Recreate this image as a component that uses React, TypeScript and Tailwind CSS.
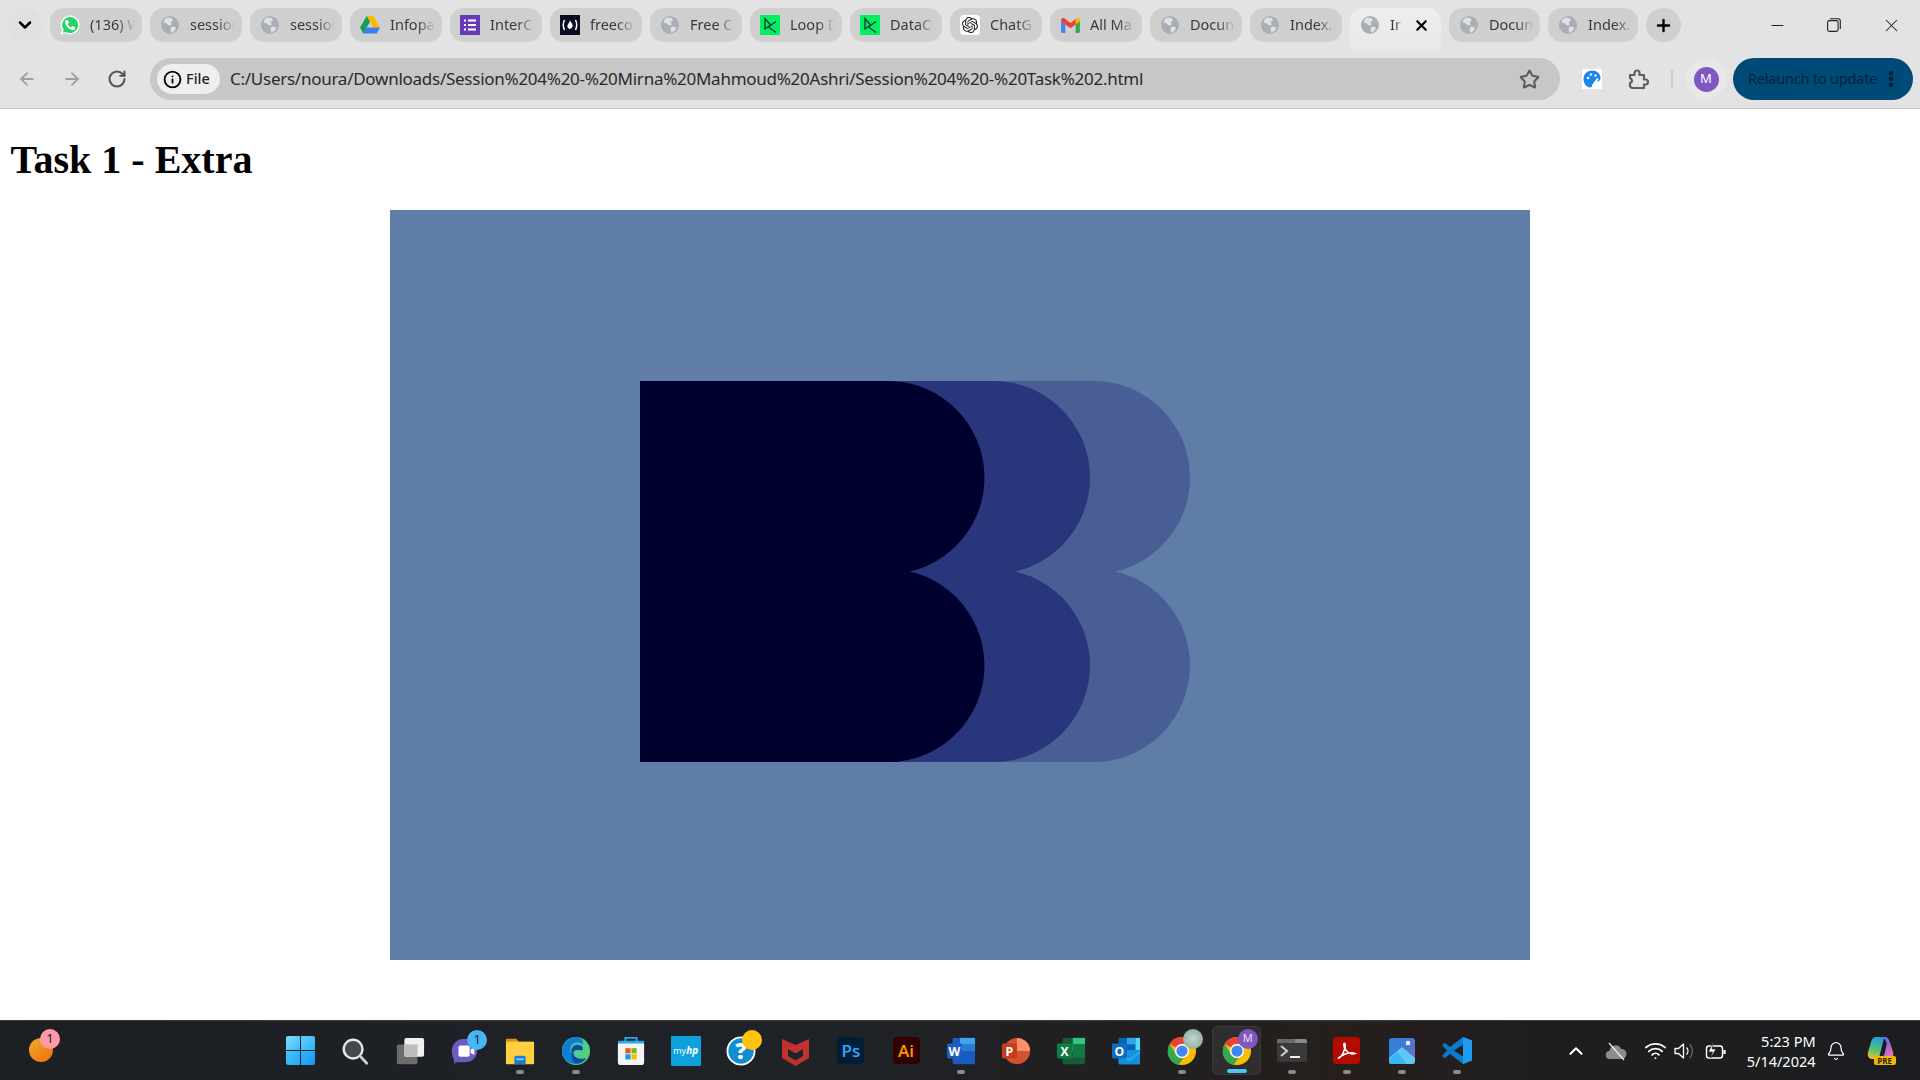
import React from "react";
import { ArrowLeft, ArrowRight, RotateCw, Star, Info, X, Plus, ChevronDown, Minus, ChevronUp, Bell, Wifi, EllipsisVertical } from "lucide-react";
import { FaPhoneAlt } from "react-icons/fa";
import { SiOpenai } from "react-icons/si";

const ui = "font-['Noto_Sans','Open_Sans',sans-serif]";

function Globe() {
  return (
    <svg viewBox="0 0 20 20" className="w-5 h-5 shrink-0">
      <circle cx="10" cy="10" r="9" fill="#a9aeb4" />
      <path d="M7 2.5 11.5 3 13 5 10.5 7.5 12 9.5 9 10.5 6 8 3.5 7.5 4.5 4.5ZM11.5 11.5 16 12 15 15.5 11.5 18 10.5 14.5Z" fill="#dfe1e4" />
    </svg>
  );
}
function Whats() {
  return (
    <div className="relative w-5 h-5 flex items-center justify-center shrink-0">
      <svg viewBox="0 0 20 20" className="w-5 h-5">
        <path d="M10 .5a9.400 9.400 0 1 1-4.600 17.600L.5 19.500l1.400-4.800A9.400 9.400 0 0 1 10 .5Z" fill="#fff" />
        <path d="M10 2a8 8 0 1 1-4 14.900l-3 .9.900-2.900A8 8 0 0 1 10 2Z" fill="#25d366" />
      </svg>
      <FaPhoneAlt className="absolute w-[10px] h-[10px] text-white" />
    </div>
  );
}
function Drive() {
  return (
    <svg viewBox="0 0 20 18" className="w-5 h-[18px] shrink-0">
      <path d="M6.700 0h6.600l6.700 11.600h-6.600z" fill="#ffba00" />
      <path d="M6.700 0 0 11.600 3.300 17.400 10 5.800z" fill="#0fa15d" />
      <path d="M6.600 11.600H20l-3.300 5.800H3.300z" fill="#3f7ee8" />
    </svg>
  );
}
function Forms() {
  return (
    <svg viewBox="0 0 20 20" className="w-5 h-5 shrink-0">
      <rect width="20" height="20" fill="#673ab7" />
      <path d="M8 5.500h8M8 10h8M8 14.500h8" stroke="#fff" strokeWidth="2" />
      <path d="M4 5.500h2M4 10h2M4 14.500h2" stroke="#fff" strokeWidth="2" />
    </svg>
  );
}
function Fcc() {
  return (
    <svg viewBox="0 0 20 20" className="w-5 h-5 shrink-0">
      <rect width="20" height="20" fill="#0a0a23" />
      <path d="M4.500 5Q2 10 4.500 15M15.500 5Q18 10 15.500 15" stroke="#fff" strokeWidth="1.500" fill="none" />
      <path d="M10 5c.5 2.500 3 3.500 2.600 6.200-.3 1.600-1.400 2.400-2.600 2.600-1.300-.2-2.400-1-2.600-2.400C7.200 9.500 9.800 8 10 5Z" fill="#fff" />
    </svg>
  );
}
function DataCamp() {
  return (
    <svg viewBox="0 0 20 20" className="w-5 h-5 shrink-0">
      <rect width="20" height="20" fill="#03ef62" />
      <path d="M5 3.500V14l5.500-4ZM16 6.500 8.500 12l7.500 5.500" stroke="#05392d" strokeWidth="1.300" fill="none" />
    </svg>
  );
}
function ChatG() {
  return (
    <div className="w-5 h-5 bg-white rounded-sm flex items-center justify-center shrink-0">
      <SiOpenai className="w-4 h-4 text-[#222]" />
    </div>
  );
}
function Gmail() {
  return (
    <svg viewBox="0 0 20 16" className="w-[19px] h-[15px] shrink-0">
      <path d="M0 3v11.500A1.500 1.500 0 0 0 1.500 16H4.500V7z" fill="#4285f4" />
      <path d="M20 3v11.500A1.500 1.500 0 0 1 18.500 16H15.500V7z" fill="#34a853" />
      <path d="M0 3.500 4.500 7 10 11l5.500-4L20 3.500V2.500C20 .5 17.800-.6 16.200.5L10 5.200 3.800.5C2.200-.6 0 .5 0 2.500Z" fill="#ea4335" />
      <path d="M15.500 7V1.500L16.200.5C17.800-.6 20 .5 20 2.500V3.500Z" fill="#fbbc04" />
    </svg>
  );
}

const tabs: [React.ReactNode, string][] = [
  [<Whats />, "(136) W"],
  [<Globe />, "session"],
  [<Globe />, "session"],
  [<Drive />, "Infopa"],
  [<Forms />, "InterC"],
  [<Fcc />, "freeco"],
  [<Globe />, "Free C"],
  [<DataCamp />, "Loop D"],
  [<DataCamp />, "DataC"],
  [<ChatG />, "ChatG"],
  [<Gmail />, "All Ma"],
  [<Globe />, "Docun"],
  [<Globe />, "Index."],
];

function Tab({ icon, label, w = "w-[92px]" }: { icon: React.ReactNode; label: string; w?: string }) {
  return (
    <div className={`${w} h-[34px] rounded-[14px] bg-[#cfcfcf] flex items-center pl-[10px] gap-[10px] shrink-0 overflow-hidden`}>
      <div className="w-5 flex justify-center shrink-0">{icon}</div>
      <div className="w-[45px] overflow-hidden whitespace-nowrap text-[14.500px] text-[#3a3a3a] [mask-image:linear-gradient(to_right,black_60%,transparent)]">{label}</div>
    </div>
  );
}

function TabStrip() {
  return (
    <div className={`h-[51px] flex items-start pt-[8px] pl-[8px] gap-2 ${ui}`}>
      <div className="w-[34px] h-[34px] rounded-full flex items-center justify-center bg-[#e0e0e0] shrink-0">
        <ChevronDown className="w-5 h-5 text-black" strokeWidth={3} />
      </div>
      {tabs.map(([i, l], k) => (
        <Tab key={k} icon={i} label={l} />
      ))}
      <div className="w-[91px] h-[43px] rounded-t-[14px] bg-gradient-to-b from-[#eeeeee] to-[#e8e8e8] flex items-start pt-[7px] pl-[10px] shrink-0">
        <div className="h-5 flex items-center gap-[10px]">
          <Globe />
          <div className="w-[11px] whitespace-nowrap text-[14.500px] text-[#3a3a3a] [mask-image:linear-gradient(to_right,black_50%,transparent_110%)]">In</div>
        </div>
        <X className="w-[17px] h-[17px] ml-[12px] mt-[2px] text-black" strokeWidth={3} />
      </div>
      <Tab icon={<Globe />} label="Docun" w="w-[91px]" />
      <Tab icon={<Globe />} label="Index." w="w-[90px]" />
      <div className="w-[35px] h-[34px] rounded-full bg-[#cfcfcf] flex items-center justify-center shrink-0">
        <Plus className="w-[19px] h-[19px] text-black" strokeWidth={3} />
      </div>
      <div className="flex-1 flex items-center h-[34px] pl-[79px]">
        <Minus className="w-[19px] h-[19px] text-[#222]" strokeWidth={1.300} />
        <div className="ml-[37px] w-[19px] flex justify-center">
          <svg viewBox="0 0 14 14" className="w-[14px] h-[14px]" fill="none" stroke="#222" strokeWidth="1.100">
            <rect x=".6" y="2.600" width="10.500" height="10.800" rx="1.800" />
            <path d="M3 .7h8a2.300 2.300 0 0 1 2.300 2.300v8" />
          </svg>
        </div>
        <X className="ml-[38px] w-[21px] h-[21px] text-[#222]" strokeWidth={1.200} />
      </div>
    </div>
  );
}

function Toolbar() {
  return (
    <div className={`h-[58px] flex items-center border-b border-[#c8c8c8] pb-[1px] ${ui}`}>
      <div className="w-[150px] flex items-center pl-[17px] shrink-0">
        <ArrowLeft className="w-5 h-5 text-[#a0a0a0]" strokeWidth={2.200} />
        <ArrowRight className="w-5 h-5 ml-[25px] text-[#a0a0a0]" strokeWidth={2.200} />
        <RotateCw className="w-5 h-5 ml-[25px] text-[#555]" strokeWidth={2.500} />
      </div>
      <div className="w-[1410px] h-[42px] rounded-full bg-[#c7c7c7] flex items-center pl-[7px] pr-[20px] shrink-0">
        <div className="w-[63px] h-[30px] rounded-full bg-[#eeeeee] flex items-center pl-[6px] gap-[4px] shrink-0">
          <Info className="w-[19px] h-[19px] text-black" strokeWidth={2.300} />
          <span className="text-[14.500px] font-medium text-[#1f1f1f]">File</span>
        </div>
        <div className="ml-[10px] flex-1 text-[17px] text-[#2a2a2a] whitespace-nowrap overflow-hidden tracking-[-0.26px]">
          C:/Users/noura/Downloads/Session%204%20-%20Mirna%20Mahmoud%20Ashri/Session%204%20-%20Task%202.html
        </div>
        <Star className="w-[21px] h-[21px] text-[#5a5a5a]" strokeWidth={2.300} />
      </div>
      <div className="w-5 h-5 ml-[22px] bg-white flex items-center justify-center shrink-0">
        <svg viewBox="0 0 20 20" className="w-5 h-5">
          <path d="M10 1.500c5 0 8.500 3.300 8.500 7.300 0 3-2 3.700-3.500 3.700-1.800 0-3 .5-4 2.500-1 2.500-1.300 3.500-2.500 3.500C4.500 18.500 1.500 14.500 1.500 10 1.500 5 5.500 1.500 10 1.500Z" fill="#1a87f0" />
          <circle cx="6" cy="9" r="1.300" fill="#fff" /><circle cx="9" cy="5.500" r="1.300" fill="#fff" /><circle cx="13.500" cy="6.500" r="1.300" fill="#fff" />
          <path d="M16 9.500 10.500 17" stroke="#fff" strokeWidth="2" />
        </svg>
      </div>
      <svg viewBox="0 0 22 22" className="w-[22px] h-[22px] ml-[25px] shrink-0" fill="none" stroke="#5f5f5f" strokeWidth="2.200" strokeLinejoin="round">
        <path d="M3 7h4.500V5a2.500 2.500 0 0 1 5 0v2H17v4.500h1.500a2.500 2.500 0 0 1 0 5H17V20H5.500a2.500 2.500 0 0 1-2.500-2.500v-2.500a2.200 2.200 0 0 0 1-4 2.200 2.200 0 0 0-1-1Z" />
      </svg>
      <div className="w-[2px] h-[19px] ml-[22px] bg-[#cdcdcd] shrink-0" />
      <div className="w-[40px] h-[40px] ml-[13px] rounded-full bg-[#e8e8e8] flex items-center justify-center shrink-0">
        <div className="w-[25px] h-[25px] rounded-full bg-[#7e57c2] flex items-center justify-center text-[13px] text-white">M</div>
      </div>
      <div className="w-[180px] h-[42px] ml-[7px] rounded-full bg-[#004a77] flex items-center pl-[15px] shrink-0">
        <span className="text-[14.500px] text-[#00233f] whitespace-nowrap tracking-[-0.2px]">Relaunch to update</span>
        <EllipsisVertical className="w-5 h-5 ml-[4px] text-[#001d35]" strokeWidth={3.200} />
      </div>
    </div>
  );
}

function Logo() {
  const lobes: [number, string][] = [
    [453.5, "#485e95"],
    [353.5, "#29367b"],
    [248, "#00002e"],
  ];
  return (
    <svg viewBox="0 0 550 381" className="w-[550px] h-[381px] block">
      {lobes.map(([cx, c]) => (
        <g key={c} fill={c}>
          <rect x="0" y="0" width={cx} height="381" />
          <circle cx={cx} cy="96.500" r="96.500" />
          <circle cx={cx} cy="284.500" r="96.500" />
        </g>
      ))}
    </svg>
  );
}

const Txt = ({ x, y, s, c, w = 700, children }: { x: number; y: number; s: number; c: string; w?: number; children: string }) => (
  <text x={x} y={y} fontSize={s} fill={c} fontWeight={w} textAnchor="middle" fontFamily="'Open Sans',sans-serif">{children}</text>
);

const Sv = ({ children, s = 30 }: { children: React.ReactNode; s?: number }) => (
  <svg viewBox="0 0 32 32" style={{ width: s, height: s }} className="block">{children}</svg>
);

const Win = () => (
  <div className="grid grid-cols-2 gap-[1px] w-[29px] h-[29px]">
    <div className="bg-gradient-to-br from-[#7fdcff] to-[#3cbcf5] rounded-tl-[2px]" />
    <div className="bg-gradient-to-br from-[#5fd0fb] to-[#2db2f5] rounded-tr-[2px]" />
    <div className="bg-gradient-to-br from-[#45c6fa] to-[#22a8f5] rounded-bl-[2px]" />
    <div className="bg-gradient-to-br from-[#35b6f8] to-[#1596f5] rounded-br-[2px]" />
  </div>
);
const Search = () => (
  <Sv><circle cx="14" cy="14" r="10" fill="#45484d" stroke="#e6e6e6" strokeWidth="2.600" /><path d="M21.500 21.500 28.500 29" stroke="#d0d0d0" strokeWidth="3" strokeLinecap="round" /></Sv>
);
const TaskView = () => (
  <Sv><rect x="2" y="9" width="22" height="21" rx="2" fill="#6b6b6b" /><rect x="10" y="2" width="21" height="20" rx="2" fill="#f1f1f1" /><rect x="10" y="9" width="14" height="13" fill="#bcbcbc" /></Sv>
);
const Teams = () => (
  <Sv><path d="M16 3c8 0 13 5.500 13 12.500S24 28 16 28H6l-2 3 .5-5C2.500 23 2 19 2 15.500 2 8 8 3 16 3Z" fill="#6b5cc4" /><rect x="9" y="10" width="12" height="12" rx="2" fill="#fff" /><path d="M22 14l4-2v8l-4-2Z" fill="#fff" /></Sv>
);
const Folder = () => (
  <Sv><path d="M1 3h11l3 3h15v6H1Z" fill="#d69a00" /><rect x="1" y="6" width="30" height="24" rx="1" fill="#ffcf3f" /><path d="M10 23a2 2 0 0 1 2-2h8a2 2 0 0 1 2 2v7H10Z" fill="#1a7fd4" /><rect x="12" y="24" width="8" height="1.500" fill="#9fd4ff" /></Sv>
);
const Edge = () => (
  <Sv><defs><linearGradient id="edg" x1="0" y1="0" x2="1" y2="1"><stop offset="0" stopColor="#36c5d8" /><stop offset="1" stopColor="#62d25a" /></linearGradient></defs><circle cx="16" cy="16" r="15" fill="url(#edg)" /><path d="M1 16C2 6 10 1 16 1c4 0 9 3 7 8-3-3-9-3-12 1-3 5 0 12 6 14 3 1 7 1 10 0-3 4-7 6-11 6C8 30 1 24 1 16Z" fill="#0f7fd2" /><path d="M11 16c0-5 5-8 10-6 2 1 3 3 2 5-1 1-3 0-6 0-4 0-5 4-2 7 3 2 7 3 12 2-3 3-6 5-10 5-5 0-6-6-6-13Z" fill="#0c4f9f" /></Sv>
);
const Store = () => (
  <Sv><path d="M10 7V2h12v5" fill="none" stroke="#29a8ea" strokeWidth="2" /><rect x="2" y="6" width="28" height="25" rx="3" fill="#f4f4f4" /><rect x="2" y="5" width="28" height="3" rx="1" fill="#29a8ea" /><rect x="10" y="13" width="5.500" height="5.500" fill="#f25022" /><rect x="16.500" y="13" width="5.500" height="5.500" fill="#7fba00" /><rect x="10" y="19.500" width="5.500" height="5.500" fill="#00a4ef" /><rect x="16.500" y="19.500" width="5.500" height="5.500" fill="#ffb900" /></Sv>
);
const MyHp = () => (
  <div className="w-[30px] h-[30px] bg-[#0f9fdb] flex items-center justify-center text-white text-[10px] italic font-['Open_Sans',sans-serif] rounded-[1px]"><span className="not-italic text-[9px]">my</span><b>hp</b></div>
);
const Help = () => (
  <div className="relative w-[30px] h-[30px]">
    <Sv><circle cx="16" cy="16" r="14.500" fill="#0f8fd0" stroke="#fff" strokeWidth="2" /><Txt x={16} y={25} s={24} c="#fff" w={800}>?</Txt></Sv>
    <div className="absolute -top-[6px] -right-[6px] w-[20px] h-[20px] rounded-full bg-[#ffc20a]" />
  </div>
);
const McAfee = () => (
  <svg viewBox="0 0 27 30" className="w-[27px] h-[30px] block">
    <path d="M0 3 13.500 9 27 3v19l-13.500 8L0 22Z" fill="#c0312f" />
    <path d="M6 13l7.500 4.500L21 13v7l-7.500 4.500L6 20Z" fill="#1f2226" />
  </svg>
);
const Box = ({ bg, c, t }: { bg: string; c: string; t: string }) => (
  <div className="w-[27px] h-[27px] rounded-[4px] flex items-center justify-center text-[17px] leading-none font-semibold font-['Open_Sans',sans-serif]" style={{ background: bg, color: c }}>{t}</div>
);
const Word = () => (
  <Sv><rect x="7" y="2" width="24" height="28" rx="1.500" fill="#185abd" /><rect x="15" y="2" width="16" height="7" fill="#41a5ee" /><rect x="15" y="9" width="16" height="7" fill="#2b7cd3" /><rect x="1" y="8" width="16" height="16" rx="1.500" fill="#1b5ebe" /><Txt x={9} y={21} s={13} c="#fff">W</Txt></Sv>
);
const Ppt = () => (
  <Sv><circle cx="17" cy="16" r="14" fill="#d35230" /><path d="M17 2a14 14 0 0 1 14 14H17Z" fill="#ff8f6b" /><rect x="1" y="8" width="16" height="16" rx="1.500" fill="#c43e1c" /><Txt x={9} y={21} s={13} c="#fff">P</Txt></Sv>
);
const Excel = () => (
  <Sv><rect x="7" y="2" width="24" height="28" rx="1.500" fill="#185c37" /><rect x="18" y="2" width="13" height="7" fill="#33c481" /><rect x="7" y="9" width="11" height="7" fill="#21a366" /><rect x="18" y="9" width="13" height="14" fill="#107c41" /><rect x="1" y="8" width="16" height="16" rx="1.500" fill="#107c41" /><Txt x={9} y={21} s={13} c="#fff">X</Txt></Sv>
);
const Outlook = () => (
  <Sv><rect x="8" y="2" width="18" height="14" fill="#0364b8" /><rect x="17" y="2" width="9" height="7" fill="#28a8ea" /><rect x="26" y="2" width="5" height="14" fill="#50d9ff" /><path d="M8 15h23v14a1.500 1.500 0 0 1-1.500 1.500H9.500A1.500 1.500 0 0 1 8 29Z" fill="#1490df" /><path d="M8 16l11.500 8L31 16v3l-11.500 8L8 19Z" fill="#28a8ea" /><rect x="1" y="8" width="16" height="16" rx="1.500" fill="#0f6cbd" /><Txt x={9} y={21} s={13} c="#fff">O</Txt></Sv>
);
const Chrome = () => (
  <Sv>
    <circle cx="16" cy="16" r="15" fill="#fbbc04" />
    <path d="M16 1a15 15 0 0 1 13 7.500H16a7.500 7.500 0 0 0-6.500 3.750L3 8.500A15 15 0 0 1 16 1Z" fill="#ea4335" />
    <path d="M3 8.500 9.500 19.750A7.500 7.500 0 0 0 18 23.300L12 31A15 15 0 0 1 3 8.500Z" fill="#34a853" />
    <circle cx="16" cy="16" r="7.500" fill="#fff" />
    <circle cx="16" cy="16" r="6" fill="#4285f4" />
  </Sv>
);
const ChromeA = () => (
  <div className="relative w-[30px] h-[30px]">
    <Chrome />
    <div className="absolute -top-[7px] -right-[6px] w-[20px] h-[20px] rounded-full bg-[radial-gradient(circle,#c5d5c8,#7da49b)]" />
  </div>
);
const ChromeM = () => (
  <div className="relative w-[30px] h-[30px]">
    <Chrome />
    <div className="absolute -top-[7px] -right-[6px] w-[20px] h-[20px] rounded-full bg-[#7e57c2] text-[11px] text-white/80 flex items-center justify-center">M</div>
  </div>
);
const Term = () => (
  <div className="w-[30px] h-[23px] rounded-[2px] bg-[#3a3a3a] overflow-hidden">
    <div className="h-[4px] bg-[#8a8a8a] flex"><div className="w-[18px] h-[4px] bg-[#6a6a6a]" /></div>
    <svg viewBox="0 0 30 19" className="w-[30px] h-[19px]"><path d="M4 3l6 5-6 5" stroke="#c8c8c8" strokeWidth="2.200" fill="none" /><path d="M13 14h10" stroke="#eee" strokeWidth="2.200" /></svg>
  </div>
);
const Acrobat = () => (
  <svg viewBox="0 0 27 27" className="w-[27px] h-[27px] block"><rect width="27" height="27" rx="3.500" fill="#b30b00" /><path d="M5 21.500c3-1 5.500-5.500 7-10.500 .8-3 0-5.500-1-4.500-1 2 1 6 3.500 8.500 2 2 5 2.200 7.500 1.500-3-1.500-9-.5-13 2-2 1.200-3.500 2.500-4 3Z" fill="none" stroke="#fff" strokeWidth="1.600" /></svg>
);
const Photos = () => (
  <svg viewBox="0 0 26 26" className="w-[26px] h-[26px] block">
    <defs><linearGradient id="ph" x1="0" y1="0" x2="1" y2="1"><stop offset="0" stopColor="#1d86dc" /><stop offset="1" stopColor="#7a66c8" /></linearGradient></defs>
    <rect width="26" height="26" rx="3" fill="url(#ph)" />
    <circle cx="19" cy="5" r="2.200" fill="#fff" />
    <path d="M0 20 13 9l13 11v3a3 3 0 0 1-3 3H3a3 3 0 0 1-3-3Z" fill="#5ec8f2" />
    <path d="M0 22 8 14l10 12H3a3 3 0 0 1-3-3Z" fill="#35b8ef" />
  </svg>
);
const VSCode = () => (
  <svg viewBox="0 0 30 27" className="w-[30px] h-[27px] block">
    <path d="M21 0 30 3.500v20L21 27 8 17l-5 4-3-2 5-5.500-5-5.500 3-2 5 4Z" fill="#0a7bcf" />
    <path d="M21 0 30 3.500v20L21 27Z" fill="#1f9cf0" />
    <path d="M21 7.500 12 13.500l9 6Z" fill="#211f1f" />
  </svg>
);

const Dot = ({ on }: { on?: boolean }) => (
  <div className={on ? "w-[20px] h-[4px] rounded-full bg-[#4fc3f7]" : "w-[8px] h-[4px] rounded-full bg-[#8a8a8a]"} />
);

const apps: [React.ReactNode, boolean][] = [
  [<Win />, false],
  [<Search />, false],
  [<TaskView />, false],
  [<div className="relative"><Teams /><div className="absolute -top-[6px] -right-[7px] w-[20px] h-[20px] rounded-full bg-[#47b6f4] text-[#0c2a44] text-[13px] flex items-center justify-center">1</div></div>, false],
  [<Folder />, true],
  [<Edge />, true],
  [<Store />, false],
  [<MyHp />, false],
  [<Help />, false],
  [<McAfee />, false],
  [<Box bg="#001e36" c="#31a8ff" t="Ps" />, false],
  [<Box bg="#330000" c="#ff9a00" t="Ai" />, false],
  [<Word />, true],
  [<Ppt />, false],
  [<Excel />, false],
  [<Outlook />, false],
  [<ChromeA />, true],
  [<ChromeM />, false],
  [<Term />, true],
  [<Acrobat />, true],
  [<Photos />, true],
  [<VSCode />, true],
];

function AppSlot({ icon, dot, active }: { icon: React.ReactNode; dot: boolean; active: boolean }) {
  return (
    <div className="w-[55.1px] h-[59px] flex justify-center shrink-0">
      <div className={`w-[49px] mt-[5px] h-[49px] rounded-[5px] relative flex items-center justify-center shrink-0 ${active ? "bg-[#2e2e2e] border border-[#3a3a3a]" : ""}`}>
        {icon}
        {dot && <div className="absolute bottom-[1px] left-0 right-0 flex justify-center"><Dot /></div>}
        {active && <div className="absolute bottom-[1px] left-0 right-0 flex justify-center"><Dot on /></div>}
      </div>
    </div>
  );
}

function Taskbar() {
  return (
    <div className={`h-[60px] border-t border-[#3b3d3f] bg-[linear-gradient(to_right,#1c2024_0%,#1f2226_45%,#211f20_60%,#261f1c_70%,#1f1e1f_80%,#1b1d20_100%)] flex items-start shrink-0 ${ui}`}>
      <div className="w-[272.5px] pl-[29px] pt-[17px] shrink-0">
        <div className="relative w-[24px] h-[24px] rounded-full bg-gradient-to-br from-[#f0a92a] to-[#ee6c0a]">
          <div className="absolute -top-[9px] left-[11px] w-[20px] h-[20px] rounded-full bg-[#ff9aa6] text-[#222] text-[13px] flex items-center justify-center">1</div>
        </div>
      </div>
      <div className="flex shrink-0">
        {apps.map(([icon, dot], i) => (
          <AppSlot key={i} icon={icon} dot={dot} active={i === 17} />
        ))}
      </div>
      <div className="flex-1 h-[59px] flex items-center text-white">
        <ChevronUp className="w-[22px] h-[22px] ml-[80px] text-white shrink-0" strokeWidth={2.300} />
        <svg viewBox="0 0 24 24" className="w-[24px] h-[24px] ml-[17px] shrink-0"><path d="M6 20a4 4 0 0 1-.5-8A6 6 0 0 1 17 10a4.500 4.500 0 0 1 1 10Z" fill="#8a8d90" /><path d="M5 4l15 17" stroke="#eee" strokeWidth="1.200" /></svg>
        <Wifi className="w-[23px] h-[23px] ml-[16px] shrink-0" strokeWidth={1.900} />
        <svg viewBox="0 0 22 22" className="w-[22px] h-[22px] ml-[6px] shrink-0" fill="none" strokeWidth="1.300">
          <path d="M2 8.500h3.500L10.500 4v14l-5-4.500H2Z" stroke="#fff" strokeLinejoin="round" />
          <path d="M13.500 7.500a5 5 0 0 1 0 7" stroke="#fff" />
          <path d="M16.500 4a10 10 0 0 1 0 14" stroke="#6a6a6a" />
        </svg>
        <svg viewBox="0 0 24 24" className="w-[24px] h-[24px] ml-[9px] shrink-0" fill="none" stroke="#fff" strokeWidth="1.400"><rect x="2.500" y="7" width="16" height="12" rx="2.500" /><path d="M20.500 11v4" strokeWidth="2.200" /><path d="M9 3 4.500 13h4l-2 6 5.500-9H8Z" fill="#fff" stroke="#1b1d20" strokeWidth=".6" /></svg>
        <div className="w-[88px] text-right text-[14.500px] leading-[20px] whitespace-nowrap shrink-0">
          <div>5:23 PM</div>
          <div>5/14/2024</div>
        </div>
        <Bell className="w-[20px] h-[20px] ml-[10px] shrink-0" strokeWidth={1.500} />
        <div className="relative ml-[21px] w-[28px] h-[29px] shrink-0">
          <svg viewBox="0 0 28 24" className="w-[28px] h-[24px] block">
            <defs>
              <linearGradient id="cop" x1="0.5" y1="0" x2="0.3" y2="1"><stop offset="0" stopColor="#2a9ae0" /><stop offset=".55" stopColor="#4fc27a" /><stop offset="1" stopColor="#f2c12e" /></linearGradient>
              <linearGradient id="cop2" x1="0" y1="0" x2="0.7" y2="1"><stop offset="0" stopColor="#2f7fe8" /><stop offset=".5" stopColor="#8a66e0" /><stop offset="1" stopColor="#ee6fb0" /></linearGradient>
            </defs>
            <path d="M9 1C6 1 5 3 4 6L1 16c-1 4 1 7 4 7h4c2 0 3-1 3.500-3L16 6c.5-2 1-4 2-5Z" fill="url(#cop)" />
            <path d="M11 1h7c2.500 0 3.500 2 4.500 4l3.500 11c1 3 0 5-3 5h-8c2-1 2.500-3 3-5l1.500-7c.5-4-2-8-8.500-8Z" fill="url(#cop2)" />
          </svg>
          <div className="absolute bottom-0 left-[7px] w-[22px] h-[9px] rounded-[2px] bg-[#f7b500] text-[#222] text-[8px] font-bold leading-[9px] text-center">PRE</div>
        </div>
      </div>
    </div>
  );
}

export default function App() {
  return (
    <div className="h-screen w-full flex flex-col overflow-hidden bg-white">
      <div className="bg-[#e3e3e3] shrink-0">
        <TabStrip />
        <Toolbar />
      </div>
      <main className="flex-1 min-h-0">
        <h1 className="ml-[10.5px] mt-[28px] mb-[27px] text-[40px] leading-[46px] font-bold text-black font-['Liberation_Serif',serif]">Task 1 - Extra</h1>
        <div className="mx-auto w-[1140px] h-[750px] bg-[#5f7da6] pl-[250px] pt-[171px]">
          <Logo />
        </div>
      </main>
      <Taskbar />
    </div>
  );
}
